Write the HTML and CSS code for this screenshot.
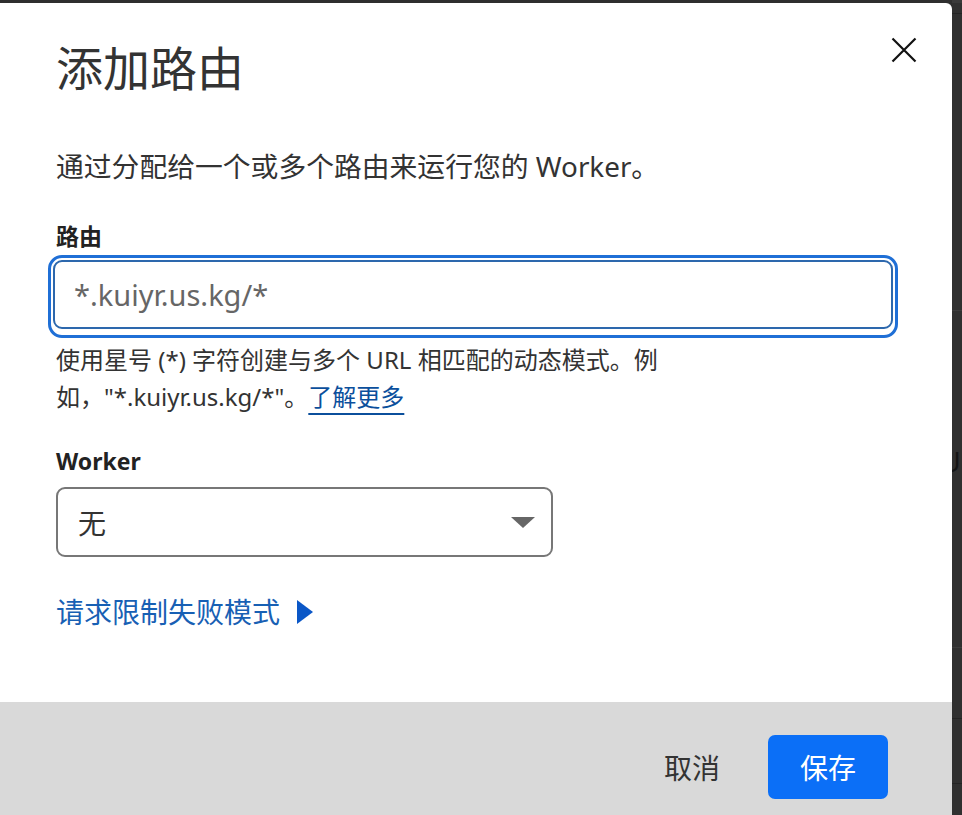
FILE: index.html
```html
<!DOCTYPE html>
<html lang="zh-CN">
<head>
<meta charset="utf-8">
<title>添加路由</title>
<link rel="stylesheet" href="styles.css">
</head>
<body>
<div class="screen">
  <div class="modal">
    <div class="modal-body">
      <div class="modal-header">
        <h1 class="title">添加路由</h1>
        <button class="close" aria-label="关闭">
          <svg width="26" height="26" viewBox="0 0 26 26"><path d="M1.5 1.5 L24.5 24.5 M24.5 1.5 L1.5 24.5" stroke="#111" stroke-width="2.2" fill="none"/></svg>
        </button>
      </div>
      <p class="desc">通过分配给一个或多个路由来运行您的 Worker。</p>
      <label class="field-label">路由</label>
      <div class="focus-ring">
        <div class="input">*.kuiyr.us.kg/*</div>
      </div>
      <p class="help">使用星号 (*) 字符创建与多个 URL 相匹配的动态模式。例如，"*.kuiyr.us.kg/*"。<a class="learn" href="#">了解更多</a></p>
      <label class="field-label worker-label">Worker</label>
      <div class="select">
        <span>无</span>
        <span class="caret"></span>
      </div>
      <div class="toggle">请求限制失败模式<span class="tri"></span></div>
    </div>
    <div class="modal-footer">
      <button class="btn-cancel">取消</button>
      <button class="btn-save">保存</button>
    </div>
  </div>
  <div class="backdrop-edge">
    <div class="edge-line l1"></div>
    <div class="edge-line l2"></div>
    <div class="edge-glyph">U</div>
    <div class="edge-line l3"></div>
    <div class="edge-line l4"></div>
    <div class="edge-line l5"></div>
  </div>
</div>
</body>
</html>
```
FILE: styles.css
```css
html, body {
  margin: 0;
  padding: 0;
  height: 100%;
  background: #2f2f2f;
  overflow: hidden;
}
body {
  font-family: "Noto Sans", "Noto Sans CJK SC", sans-serif;
  color: #333;
}
.screen {
  display: flex;
  height: 815px;
}
.modal {
  width: 952px;
  flex: none;
  margin-top: 3px;
  background: #fff;
  border-top-right-radius: 6px;
  display: flex;
  flex-direction: column;
}
.modal-body {
  flex: 1;
  padding: 0 35px 0 56px;
}
.modal-header {
  display: flex;
  justify-content: space-between;
  align-items: flex-start;
  padding-top: 30px;
}
.title {
  margin: 0;
  font-size: 47px;
  font-weight: 400;
  line-height: 70px;
  color: #333;
}
.close {
  border: 0;
  background: none;
  padding: 0;
  margin-top: 4px;
  width: 26px;
  height: 26px;
  cursor: pointer;
}
.desc {
  margin: 43px 0 0;
  font-size: 27.8px;
  line-height: 40px;
}
.field-label {
  display: block;
  margin-top: 34px;
  font-size: 23px;
  font-weight: 700;
  line-height: 32px;
  color: #222;
}
.focus-ring {
  margin: 3px 0 0 -8px;
  width: 840px;
  height: 73px;
  border: 3px solid #1f6fd6;
  border-radius: 14px;
  padding: 2px;
}
.input {
  height: 69px;
  border: 2px solid #2d68ad;
  border-radius: 9px;
  box-sizing: border-box;
  padding-left: 19px;
  display: flex;
  align-items: center;
  font-size: 29px;
  color: #666;
}
.help {
  margin: 3px 0 0;
  max-width: 625px;
  font-size: 24px;
  line-height: 37px;
  color: #333;
}
.learn {
  color: #0b4f9c;
  text-decoration: underline;
  text-decoration-thickness: 2px;
  text-underline-offset: 7px;
}
.worker-label {
  margin-top: 30px;
}
.select {
  margin-top: 10px;
  width: 497px;
  height: 70px;
  box-sizing: border-box;
  border: 2px solid #777;
  border-radius: 9px;
  display: flex;
  align-items: center;
  justify-content: space-between;
  padding: 0 16px 0 20px;
  font-size: 28px;
  color: #333;
}
.caret {
  width: 0;
  height: 0;
  border-left: 12px solid transparent;
  border-right: 12px solid transparent;
  border-top: 11px solid #666;
}
.toggle {
  margin-top: 35px;
  font-size: 28px;
  line-height: 40px;
  color: #1860b4;
  display: flex;
  align-items: center;
  gap: 17px;
}
.tri {
  width: 0;
  height: 0;
  border-top: 12px solid transparent;
  border-bottom: 12px solid transparent;
  border-left: 16px solid #0a57c7;
}
.modal-footer {
  height: 113px;
  box-sizing: border-box;
  background: #d9d9d9;
  display: flex;
  justify-content: flex-end;
  align-items: center;
  gap: 48px;
  padding: 16px 64px 0 0;
}
.btn-cancel {
  border: 0;
  background: none;
  font-family: inherit;
  font-size: 28px;
  color: #333;
  padding: 0;
}
.btn-save {
  border: 0;
  font-family: inherit;
  font-size: 28px;
  color: #fff;
  background: #0b6ff7;
  border-radius: 7px;
  width: 120px;
  height: 64px;
  padding: 0;
}
.backdrop-edge {
  flex: 1;
  overflow: hidden;
  background: #303030;
  border-top: 3px solid #3a3a3a;
}
.edge-line {
  height: 1px;
  background: #242424;
}
.l1 { margin-top: 10px; }
.l2 { margin-top: 296px; background: #3c3c3c; }
.edge-glyph {
  margin-top: 136px;
  margin-left: -11px;
  font-size: 27px;
  line-height: 30px;
  color: #151515;
  white-space: nowrap;
}
.l3 { margin-top: 170px; background: #3c3c3c; }
.l4 { margin-top: 70px; }
.l5 { margin-top: 64px; }
```
